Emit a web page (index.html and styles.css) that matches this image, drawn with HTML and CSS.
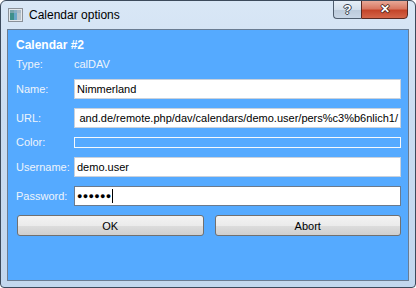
FILE: index.html
```html
<!DOCTYPE html>
<html lang="en">
<head>
    <meta charset="UTF-8">
    <title>Calendar options</title>
    <link rel="stylesheet" href="styles.css">
</head>
<body>
    <div class="window">
        <div class="titlebar">
            <svg class="app-icon" width="15" height="14" viewBox="0 0 15 14">
                <rect x="0.5" y="0.5" width="14" height="13" fill="#e4e8ec" stroke="#8a9098"/>
                <rect x="2" y="2" width="4" height="10" fill="#3f8f8a"/>
                <rect x="6" y="2" width="3" height="10" fill="#6aa7c9"/>
                <rect x="9" y="2" width="4" height="10" fill="#b9c4cc"/>
                <rect x="2" y="2" width="11" height="3" fill="#9fb3c1" opacity="0.6"/>
            </svg>
            <span class="title">Calendar options</span>
            <div class="caption-buttons">
                <div class="cap-btn help">?</div>
                <div class="cap-btn close">&#x2715;</div>
            </div>
        </div>

        <div class="client">
            <div class="heading">Calendar #2</div>

            <div class="form">
                <span class="label">Type:</span>
                <span class="value">calDAV</span>

                <span class="label">Name:</span>
                <div class="field">Nimmerland</div>

                <span class="label">URL:</span>
                <div class="field scrolled"><span>and.de/remote.php/dav/calendars/demo.user/pers%c3%b6nlich1/</span></div>

                <span class="label">Color:</span>
                <div class="color-field"></div>

                <span class="label">Username:</span>
                <div class="field">demo.user</div>

                <span class="label">Password:</span>
                <div class="field password"><span class="dots">&#9679;&#9679;&#9679;&#9679;&#9679;&#9679;</span><span class="caret"></span></div>
            </div>

            <div class="buttons">
                <button>OK</button>
                <button>Abort</button>
            </div>
        </div>
    </div>
</body>
</html>
```

FILE: styles.css
```css
body {
    margin: 0;
    padding: 0;
    background: #ffffff;
}
.window {
    width: 416px;
    height: 288px;
    box-sizing: border-box;
    border: 1px solid #3c4a5c;
    border-radius: 6px 6px 4px 4px;
    background: linear-gradient(180deg, #d9e7f6 0%, #cadcf1 40%, #c2d7ee 100%);
    font-family: "Liberation Sans", Arial, sans-serif;
    overflow: hidden;
}
.titlebar {
    height: 28px;
    display: flex;
    align-items: flex-start;
}
.app-icon {
    margin: 7px 0 0 7px;
}
.title {
    margin: 7px 0 0 6px;
    font-size: 12px;
    line-height: 15px;
    color: #000;
}
.caption-buttons {
    margin-left: auto;
    margin-right: 7px;
    margin-top: -1px;
    display: flex;
}
.cap-btn {
    height: 19px;
    box-sizing: border-box;
    border: 1px solid #4f5d6e;
    text-align: center;
    font-weight: bold;
    color: #fff;
    font-size: 13px;
    line-height: 17px;
}
.help {
    width: 28px;
    border-radius: 0 0 0 4px;
    border-right: none;
    background: linear-gradient(180deg, #e6eef7 0%, #d3dfec 50%, #bccbdc 55%, #c8d6e6 100%);
    text-shadow: 0 0 1px #3a4452, 1px 0 0 #3a4452, -1px 0 0 #3a4452, 0 1px 0 #3a4452, 0 -1px 0 #3a4452;
}
.close {
    width: 47px;
    border-radius: 0 0 4px 0;
    border-color: #5a2a22;
    background: linear-gradient(180deg, #e8a897 0%, #d97862 45%, #c4452a 55%, #d4664a 100%);
    font-size: 12px;
    text-shadow: 1px 0 0 #4a2018, -1px 0 0 #4a2018, 0 1px 0 #4a2018, 0 -1px 0 #4a2018;
}
.client {
    margin: 0 6px;
    height: 252px;
    box-sizing: border-box;
    border: 1px solid #6a7c92;
    background: #55aaff;
    padding: 9px 7px 0 8px;
    font-size: 11px;
    color: #eef4fb;
}
.heading {
    font-weight: bold;
    font-size: 12px;
    line-height: 13px;
    color: #ffffff;
    margin-bottom: 7px;
}
.form {
    display: grid;
    grid-template-columns: 58px 1fr;
    grid-template-rows: 11px 20px 20px 11px 20px 20px;
    row-gap: 9px;
    align-items: center;
}
.label,
.value {
    line-height: 13px;
}
.field {
    height: 20px;
    box-sizing: border-box;
    background: #ffffff;
    border: 1px solid #c9d1dc;
    color: #000;
    padding: 0 2px;
    font-size: 11px;
    line-height: 18px;
    white-space: nowrap;
    overflow: hidden;
}
.scrolled {
    display: flex;
    justify-content: flex-end;
}
.password {
    display: flex;
    align-items: center;
    border-color: #6b7a8c;
}
.dots {
    font-size: 9px;
    letter-spacing: 0.3px;
}
.caret {
    width: 1px;
    height: 14px;
    background: #000;
    margin-left: 1px;
}
.color-field {
    height: 11px;
    box-sizing: border-box;
    border: 1px solid #f4f8fc;
}
.buttons {
    display: grid;
    grid-template-columns: 1fr 1fr;
    column-gap: 11px;
    margin: 9px 0 0 1px;
}
button {
    height: 21px;
    border: 1px solid #707070;
    border-radius: 3px;
    background: linear-gradient(180deg, #f3f3f3 0%, #ebebeb 50%, #dddddd 51%, #cfcfcf 100%);
    font-family: "Liberation Sans", Arial, sans-serif;
    font-size: 11px;
    color: #000;
    padding: 0;
}
```
